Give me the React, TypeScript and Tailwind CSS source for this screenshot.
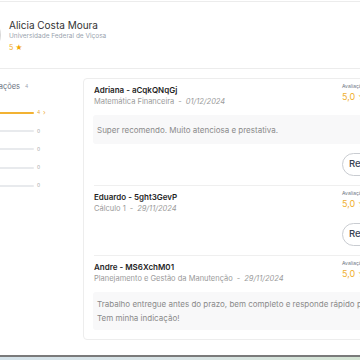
import React from 'react';

type Review = {
  author: string;
  subject: string;
  date: string;
  text?: string[];
  reply?: boolean;
};

const REVIEWS: Review[] = [
  {
    author: 'Adriana - aCqkQNqGj',
    subject: 'Matemática Financeira',
    date: '01/12/2024',
    text: ['Super recomendo. Muito atenciosa e prestativa.'],
    reply: true,
  },
  {
    author: 'Eduardo - 5ght3GevP',
    subject: 'Cálculo 1',
    date: '29/11/2024',
    reply: true,
  },
  {
    author: 'Andre - MS6XchM01',
    subject: 'Planejamento e Gestão da Manutenção',
    date: '29/11/2024',
    text: ['Trabalho entregue antes do prazo, bem completo e responde rápido pelo WhatsApp.', 'Tem minha indicação!'],
  },
];

const BARS = [4, 0, 0, 0, 0];

const ReviewItem = ({ r, last }: { r: Review; last: boolean }) => (
  <div className={`pt-[6px] pb-[9px] ${last ? '' : 'border-b border-[#efefef]'}`}>
    <div className="flex">
      <div className="flex-1">
        <p className="text-[8px] leading-[10px] font-semibold text-[#1f1f1f]">{r.author}</p>
        <p className="mt-[2px] text-[7.5px] leading-[10px] text-[#9a9a9a] whitespace-nowrap">
          {r.subject}
          <span className="mx-[4px]">-</span>
          <span className="italic">{r.date}</span>
        </p>
      </div>
      <div className="w-[59px] shrink-0 -mt-[2px]">
        <p className="text-[5px] leading-[6px] text-[#6f7785]">Avaliação</p>
        <p className="mt-[3px] text-[9px] leading-[10px] text-[#f0b02e] whitespace-nowrap">5,0 ★</p>
      </div>
    </div>
    {r.text && (
      <div className="mt-[8px] -ml-[1px] min-h-[29px] flex flex-col justify-center bg-[#f8f8f9] rounded-[3px] px-[4px] py-[5px] text-[8px] leading-[14px] text-[#8a8a8a] whitespace-nowrap">
        {r.text.map((t) => (
          <p key={t}>{t}</p>
        ))}
      </div>
    )}
    {r.reply && (
      <div className="flex mt-[9px]">
        <div className="flex-1" />
        <div className="w-[59px] shrink-0 flex">
          <button className="h-[23px] px-[6px] rounded-full border border-[#c9ccd1] text-[9.5px] font-medium text-[#374151] bg-white">
            Responder
          </button>
        </div>
      </div>
    )}
  </div>
);

export default function App() {
  return (
    <div className="w-[360px] h-[360px] overflow-hidden bg-white flex flex-col font-['Inter',sans-serif]">
      {/* profile header */}
      <div className="mt-[1px] h-[68px] shrink-0 border-y border-[#ececec] flex items-center">
        <div className="-ml-[43px] w-[44px] h-[44px] rounded-full border border-[#d8d8d8] bg-white shrink-0" />
        <div className="ml-[8px]">
          <p className="text-[10px] leading-[14px] text-[#333]">Alicia Costa Moura</p>
          <p className="text-[6.5px] leading-[9px] text-[#9aa3ae]">Universidade Federal de Viçosa</p>
          <p className="mt-[2px] text-[7px] leading-[9px] text-[#efa92a]">
            5 <span className="text-[#f2a600]">★</span>
          </p>
        </div>
      </div>

      <div className="flex-1 flex overflow-hidden">
        {/* rating summary */}
        <div className="-ml-[18px] w-[101px] shrink-0 pt-[13px]">
          <div className="flex items-center gap-[5px] h-[10px]">
            <span className="text-[7.5px] text-[#6b7280]">Avaliações</span>
            <span className="text-[5px] text-[#9ca3af]">4</span>
          </div>
          <div className="mt-[12px] w-[73px]">
            {BARS.map((n, i) => (
              <div key={i} className="flex items-center h-[18.2px]">
                <div className={`flex-1 h-[2px] rounded-full ${n > 0 ? 'bg-[#f2b233]' : 'bg-[#e8eaed]'}`} />
                <span className={`ml-[3px] w-[6px] text-[5px] ${n > 0 ? 'text-[#e7a93a]' : 'text-[#a3a3a3]'}`}>{n}</span>
                <span className="w-[12px] text-[7px] text-[#f0b040]">{n > 0 ? '›' : ''}</span>
              </div>
            ))}
          </div>
        </div>

        {/* reviews list */}
        <div className="mt-[9px] self-start w-[329px] shrink-0 border border-[#ededed] rounded-[4px] px-[10px]">
          {REVIEWS.map((r, i) => (
            <ReviewItem key={r.author} r={r} last={i === REVIEWS.length - 1} />
          ))}
        </div>
      </div>

      {/* desktop taskbar edge */}
      <div className="h-[5px] shrink-0 border-t-2 border-[#7a7a7a] bg-gradient-to-r from-[#d5e3ea] via-[#d9e4e6] to-[#d3e4d3]" />
    </div>
  );
}
